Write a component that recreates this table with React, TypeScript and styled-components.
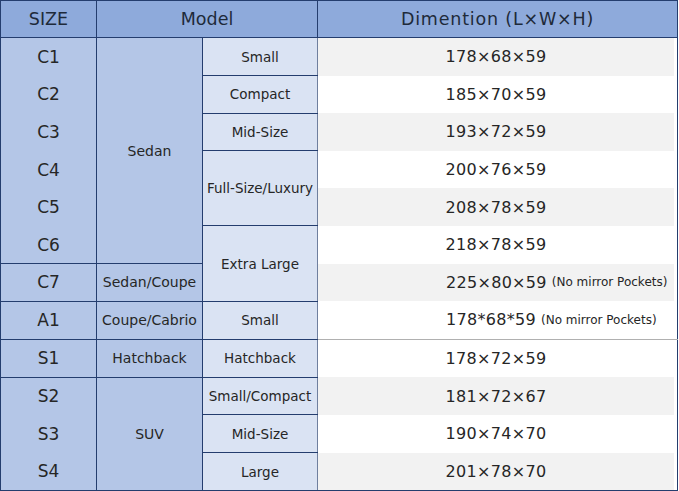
import React from 'react'
import styled, { createGlobalStyle } from 'styled-components'

const GlobalStyle = createGlobalStyle`
    html, body {
        margin: 0;
        padding: 0;
        background: #ffffff;
    }
    body {
        font-family: 'DejaVu Sans', Verdana, sans-serif;
        color: #222222;
    }
`

const NAVY = '#243d6e'

interface Row {
    size: string
    model?: { label: string, span: number }
    type?: { label: string, span: number }
    dim: string
    note?: string
    shaded: boolean
    divider?: boolean
}

const rows: Row[] = [
    { size: 'C1', model: { label: 'Sedan', span: 6 }, type: { label: 'Small', span: 1 }, dim: '178×68×59', shaded: true },
    { size: 'C2', type: { label: 'Compact', span: 1 }, dim: '185×70×59', shaded: false },
    { size: 'C3', type: { label: 'Mid-Size', span: 1 }, dim: '193×72×59', shaded: true },
    { size: 'C4', type: { label: 'Full-Size/Luxury', span: 2 }, dim: '200×76×59', shaded: false },
    { size: 'C5', dim: '208×78×59', shaded: true },
    { size: 'C6', type: { label: 'Extra Large', span: 2 }, dim: '218×78×59', shaded: false },
    { size: 'C7', model: { label: 'Sedan/Coupe', span: 1 }, dim: '225×80×59', note: '(No mirror Pockets)', shaded: true, divider: true },
    { size: 'A1', model: { label: 'Coupe/Cabrio', span: 1 }, type: { label: 'Small', span: 1 }, dim: '178*68*59', note: '(No mirror Pockets)', shaded: false, divider: true },
    { size: 'S1', model: { label: 'Hatchback', span: 1 }, type: { label: 'Hatchback', span: 1 }, dim: '178×72×59', shaded: false, divider: true },
    { size: 'S2', model: { label: 'SUV', span: 3 }, type: { label: 'Small/Compact', span: 1 }, dim: '181×72×67', shaded: true, divider: true },
    { size: 'S3', type: { label: 'Mid-Size', span: 1 }, dim: '190×74×70', shaded: false },
    { size: 'S4', type: { label: 'Large', span: 1 }, dim: '201×78×70', shaded: true },
]

const App: React.FC = () => {
    return (
        <>
            <GlobalStyle />
            <Table>
                <colgroup>
                    <col style={{ width: 96 }} />
                    <col style={{ width: 106 }} />
                    <col style={{ width: 115 }} />
                    <col />
                </colgroup>
                <thead>
                    <HeadRow>
                        <HeadCell>SIZE</HeadCell>
                        <HeadCell colSpan={2}>Model</HeadCell>
                        <HeadCell $wide>Dimention (L×W×H)</HeadCell>
                    </HeadRow>
                </thead>
                <tbody>
                    {rows.map((row, i) => (
                        <BodyRow key={i}>
                            <SizeCell $divider={row.divider}>{row.size}</SizeCell>
                            {row.model && (
                                <ModelCell rowSpan={row.model.span}>{row.model.label}</ModelCell>
                            )}
                            {row.type && (
                                <TypeCell rowSpan={row.type.span}>{row.type.label}</TypeCell>
                            )}
                            <DimCell $divider={row.size === 'S1'}>
                                <DimShade $shaded={row.shaded} $note={!!row.note}>
                                    {row.dim}
                                    {row.note && <Note>{row.note}</Note>}
                                </DimShade>
                            </DimCell>
                        </BodyRow>
                    ))}
                </tbody>
            </Table>
        </>
    )
}

const Table = styled.table`
    width: 678px;
    table-layout: fixed;
    border-collapse: collapse;
    border: 1.5px solid ${NAVY};
    font-family: 'DejaVu Sans', Verdana, sans-serif;
    color: #262626;
`

const HeadRow = styled.tr`
    height: 37px;
    background: #8eaadb;
`

const HeadCell = styled.th<{ $wide?: boolean }>`
    font-weight: normal;
    font-size: 17.5px;
    letter-spacing: ${p => p.$wide ? '0.8px' : '0'};
    text-align: center;
    padding: 0;
    border: 1.5px solid ${NAVY};
    color: #1e2a3a;
`

const BodyRow = styled.tr`
    height: 37.6px;
`

const SizeCell = styled.td<{ $divider?: boolean }>`
    background: #b4c6e7;
    font-size: 17px;
    text-align: center;
    padding: 0;
    border-right: 1.5px solid ${NAVY};
    border-top: ${p => p.$divider ? `1.5px solid ${NAVY}` : 'none'};
`

const ModelCell = styled.td`
    background: #b4c6e7;
    font-size: 14px;
    text-align: center;
    padding: 0;
    border: 1.5px solid ${NAVY};
`

const TypeCell = styled.td`
    background: #dae3f3;
    font-size: 13.5px;
    text-align: center;
    padding: 0;
    white-space: nowrap;
    border: 1.5px solid ${NAVY};
    border-right: 1.5px solid #6f7f9e;
`

const DimCell = styled.td<{ $divider?: boolean }>`
    padding: 0 3px 0 0;
    height: 37.6px;
    border-top: ${p => p.$divider ? '1px solid #b0b0b0' : 'none'};
`

const DimShade = styled.div<{ $shaded: boolean, $note: boolean }>`
    height: 100%;
    min-height: 37px;
    display: flex;
    align-items: center;
    justify-content: ${p => p.$note ? 'flex-start' : 'center'};
    padding-left: ${p => p.$note ? '128px' : '0'};
    background: ${p => p.$shaded ? '#f2f2f2' : '#ffffff'};
    font-size: 16px;
    letter-spacing: 0.3px;
    white-space: nowrap;
    box-sizing: border-box;
`

const Note = styled.span`
    font-size: 12px;
    letter-spacing: 0;
    margin-left: 5px;
`

export default App
